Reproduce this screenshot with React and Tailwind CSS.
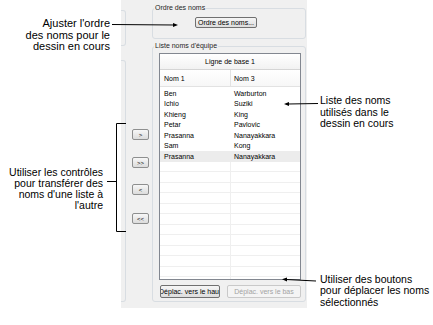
import React from 'react';

const names = [
  ['Ben', 'Warburton'],
  ['Ichio', 'Suziki'],
  ['Khieng', 'King'],
  ['Petar', 'Pavlovic'],
  ['Prasanna', 'Nanayakkara'],
  ['Sam', 'Kong'],
  ['Prasanna', 'Nanayakkara'],
];

const transferButtons = [
  { label: '>', top: 'mt-[129px]' },
  { label: '>>', top: 'mt-[17px]' },
  { label: '<', top: 'mt-[16px]' },
  { label: '<<', top: 'mt-[18px]' },
];

const Callouts = () => (
  <svg className="absolute inset-0 pointer-events-none" width="433" height="325" viewBox="0 0 433 325">
    <g stroke="#000" strokeWidth="1" fill="none">
      <line x1="112" y1="24.5" x2="175" y2="25" />
      <line x1="288" y1="104" x2="318" y2="103.5" />
      <polyline points="126,123.5 116.5,123.5 116.5,231.5 126,231.5" />
      <line x1="107" y1="181.5" x2="116.5" y2="181.5" />
      <line x1="286" y1="279.5" x2="316" y2="281" />
    </g>
    <g fill="#000">
      <path d="M178 25 L173 23 L173 27 Z" />
      <path d="M284 104 L289 102 L289 106 Z" />
      <path d="M282 279.3 L287 277.5 L287 281.5 Z" />
    </g>
  </svg>
);

const GroupBox = ({ label, className, children }) => (
  <div className={`relative border border-[#d8dde2] rounded-[3px] ${className}`}>
    <span className="absolute -top-[5px] left-[1px] px-[1px] bg-[#f0f0f0] text-[7px] leading-[8px] text-[#1e1e1e]">
      {label}
    </span>
    {children}
  </div>
);

const App = () => {
  return (
    <div className="w-[433px] h-[325px] bg-white relative flex overflow-hidden text-black font-['Liberation_Sans',Arial,sans-serif]">
      {/* left callouts */}
      <div className="w-[121px] shrink-0 flex flex-col items-end">
        <p className="mt-[18px] mr-[11px] text-right text-[11px] leading-[11.5px]">
          Ajuster l'ordre<br />des noms pour le<br />dessin en cours
        </p>
        <p className="mt-[114px] mr-[18px] text-right text-[10.5px] leading-[11.3px]">
          Utiliser les contrôles<br />pour transférer des<br />noms d'une liste à<br />l'autre
        </p>
      </div>

      {/* dialog panel */}
      <div className="w-[186px] h-[308px] shrink-0 bg-[#f0f0f0] flex">
        <div className="w-[5px] flex flex-col">
          <div className="mt-[10px] h-[36px] border-y border-r border-[#d8dde2] rounded-r-[3px]" />
          <div className="mt-[14px] h-[242px] border-y border-r border-[#d8dde2] rounded-r-[3px]" />
        </div>

        <div className="w-[26px] flex flex-col pl-[6px]">
          {transferButtons.map((b) => (
            <button
              key={b.label}
              className={`${b.top} w-[17px] h-[11px] flex items-center justify-center border border-[#8e8f8f] rounded-[2px] bg-gradient-to-b from-[#f7f7f7] to-[#dcdcdc] text-[6px] leading-none`}
            >
              {b.label}
            </button>
          ))}
        </div>

        <div className="w-[154px] flex flex-col">
          <GroupBox label="Ordre des noms" className="mt-[8px] h-[31px]">
            <button className="mt-[8px] ml-[42px] w-[62px] h-[11px] flex items-center justify-center border border-[#707070] rounded-[2px] bg-gradient-to-b from-[#f6f6f6] to-[#dddddd] text-[7px] leading-none">
              Ordre des noms...
            </button>
          </GroupBox>

          <GroupBox label="Liste noms d'équipe" className="mt-[7px] h-[256px] flex flex-col">
            <div className="mt-[6px] ml-[6px] w-[142px] h-[227px] border border-[#828790] bg-white flex flex-col overflow-hidden text-[7px] leading-none">
              <div className="h-[16px] shrink-0 flex items-center justify-center bg-gradient-to-b from-white to-[#f2f2f2] border-b border-[#d5d5d5]">
                Ligne de base 1
              </div>
              <div className="h-[17px] shrink-0 flex bg-gradient-to-b from-white to-[#f7f7f7] border-b border-[#e2e2e2]">
                <div className="w-[71px] pl-[4px] flex items-center border-r border-[#e2e2e2]">Nom 1</div>
                <div className="flex-1 pl-[3px] flex items-center">Nom 3</div>
              </div>
              <div className="h-[1px] shrink-0" />
              {names.map(([first, last], i) => (
                <div
                  key={i}
                  className={`h-[10.5px] shrink-0 flex ${i === names.length - 1 ? 'bg-[#ececec]' : ''}`}
                >
                  <div className="w-[71px] pl-[4px] flex items-center">{first}</div>
                  <div className="flex-1 pl-[3px] flex items-center">{last}</div>
                </div>
              ))}
              {Array.from({ length: 12 }).map((_, i) => (
                <div key={`e${i}`} className="h-[10.5px] shrink-0 flex border-b border-[#efefef]">
                  <div className="w-[71px] border-r border-[#efefef]" />
                  <div className="flex-1" />
                </div>
              ))}
            </div>

            <div className="mt-[5px] ml-[7px] flex gap-[7px]">
              <button className="w-[60px] h-[13px] flex items-center justify-center overflow-hidden whitespace-nowrap border border-[#707070] rounded-[2px] bg-gradient-to-b from-[#f6f6f6] to-[#dddddd] text-[7px] leading-none">
                Déplac. vers le haut
              </button>
              <button className="w-[74px] h-[13px] flex items-center justify-center overflow-hidden whitespace-nowrap border border-[#c9c9c9] rounded-[2px] bg-[#f4f4f4] text-[#a3a3a3] text-[7px] leading-none">
                Déplac. vers le bas
              </button>
            </div>
          </GroupBox>
        </div>
      </div>

      {/* right callouts */}
      <div className="flex-1 flex flex-col pl-[13px]">
        <p className="mt-[95px] text-[10.5px] leading-[11.5px]">
          Liste des noms<br />utilisés dans le<br />dessin en cours
        </p>
        <p className="mt-[144px] text-[10.5px] leading-[11.8px] whitespace-nowrap">
          Utiliser des boutons<br />pour déplacer les noms<br />sélectionnés
        </p>
      </div>

      <Callouts />
    </div>
  );
};

export default App;
